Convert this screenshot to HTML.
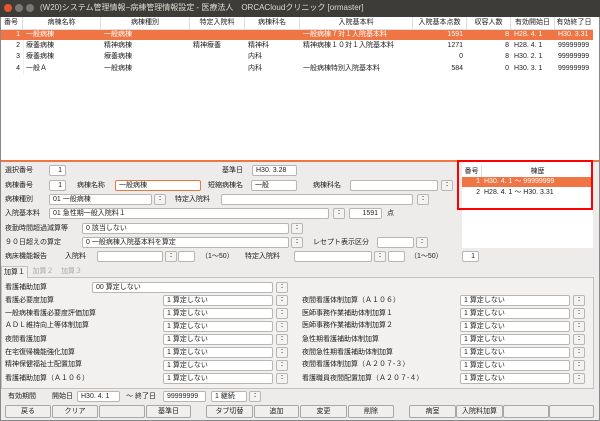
<!DOCTYPE html><html><head><meta charset="utf-8"><style>
*{margin:0;padding:0;box-sizing:border-box}
body{width:600px;height:421px;overflow:hidden;background:#edeceb;font-family:"Liberation Sans","Noto Sans CJK JP",sans-serif;font-size:7px;color:#222;position:relative}
div,span{position:absolute;white-space:nowrap}
.t{line-height:10px}
.b{background:#fff;border:1px solid #b8b6b2;border-radius:2px;height:11px;line-height:9px;padding-left:3px;font-size:7px}
.s{background:#f4f3f2;border:1px solid #b8b6b2;border-radius:2px;height:11px;width:12px;text-align:center;line-height:8px;font-size:7px;font-weight:bold;color:#444}
.btn{background:#f0efee;border:1px solid #a9a7a3;border-radius:2px;height:13px;line-height:11px;text-align:center;font-size:7px}
.h{top:17px;height:12px;line-height:12px;text-align:center;border-right:1px solid #ddd;font-size:7px}
.r{height:11px;line-height:11px;font-size:7px}
</style></head><body>
<div style="left:0;top:0;width:600px;height:17px;background:#3d3c38;color:#dfdbd2;font-size:8px;line-height:16px;padding-left:40px">(W20)システム管理情報−病棟管理情報設定 - 医療法人　ORCACloudクリニック [ormaster]</div>
<div style="left:4px;top:4px;width:8px;height:8px;border-radius:50%;background:#e9552a"></div>
<div style="left:15px;top:4px;width:8px;height:8px;border-radius:50%;background:#7a7975"></div>
<div style="left:26px;top:4px;width:8px;height:8px;border-radius:50%;background:#7a7975"></div>
<div style="left:0;top:17px;width:600px;height:144px;background:#fff"></div>
<div class="h" style="left:0;width:23px">番号</div>
<div class="h" style="left:23px;width:78px">病棟名称</div>
<div class="h" style="left:101px;width:89px">病棟種別</div>
<div class="h" style="left:190px;width:55px">特定入院料</div>
<div class="h" style="left:245px;width:55px">病棟科名</div>
<div class="h" style="left:300px;width:113px">入院基本料</div>
<div class="h" style="left:413px;width:54px">入院基本点数</div>
<div class="h" style="left:467px;width:44px">収容人数</div>
<div class="h" style="left:511px;width:44px">有効開始日</div>
<div class="h" style="left:555px;width:38px;border:0">有効終了日</div>
<div style="left:0;top:29px;width:593px;height:1px;background:#ddd"></div>
<div style="left:0;top:30px;width:593px;height:10px;background:#f07545"></div>
<div class="r" style="left:0;top:29px;width:593px;color:#fff">
<span style="left:0;width:20px;text-align:right">1</span><span style="left:26px">一般病棟</span><span style="left:104px">一般病棟</span><span style="left:303px">一般病棟７対１入院基本料</span><span style="left:413px;width:50px;text-align:right">1591</span><span style="left:467px;width:42px;text-align:right">8</span><span style="left:514px">H28. 4. 1</span><span style="left:558px">H30. 3.31</span></div>
<div class="r" style="left:0;top:40px;width:593px">
<span style="left:0;width:20px;text-align:right">2</span><span style="left:26px">療養病棟</span><span style="left:104px">精神病棟</span><span style="left:193px">精神療養</span><span style="left:248px">精神科</span><span style="left:303px">精神病棟１０対１入院基本料</span><span style="left:413px;width:50px;text-align:right">1271</span><span style="left:467px;width:42px;text-align:right">8</span><span style="left:514px">H28. 4. 1</span><span style="left:558px">99999999</span></div>
<div class="r" style="left:0;top:51px;width:593px">
<span style="left:0;width:20px;text-align:right">3</span><span style="left:26px">療養病棟</span><span style="left:104px">療養病棟</span><span style="left:248px">内科</span><span style="left:413px;width:50px;text-align:right">0</span><span style="left:467px;width:42px;text-align:right">8</span><span style="left:514px">H30. 2. 1</span><span style="left:558px">99999999</span></div>
<div class="r" style="left:0;top:63px;width:593px">
<span style="left:0;width:20px;text-align:right">4</span><span style="left:26px">一般Ａ</span><span style="left:104px">一般病棟</span><span style="left:248px">内科</span><span style="left:303px">一般病棟特別入院基本料</span><span style="left:413px;width:50px;text-align:right">584</span><span style="left:467px;width:42px;text-align:right">0</span><span style="left:514px">H30. 3. 1</span><span style="left:558px">99999999</span></div>
<div style="left:23px;top:40px;width:1px;height:35px;background:#eee"></div>
<div style="left:0;top:160px;width:600px;height:2px;background:#f07545"></div>

<div class="t" style="left:5px;top:166px">選択番号</div><div class="b" style="left:49px;top:165px;width:17px;text-align:right;padding-right:3px">1</div>
<div class="t" style="left:222px;top:166px">基準日</div><div class="b" style="left:252px;top:165px;width:45px">H30. 3.28</div>
<div class="t" style="left:5px;top:181px">病棟番号</div><div class="b" style="left:49px;top:180px;width:17px;text-align:right;padding-right:3px">1</div>
<div class="t" style="left:77px;top:181px">病棟名称</div><div class="b" style="left:115px;top:180px;width:86px;border-color:#e9773f">一般病棟</div>
<div class="t" style="left:208px;top:181px">短縮病棟名</div><div class="b" style="left:251px;top:180px;width:46px">一般</div>
<div class="t" style="left:313px;top:181px">病棟科名</div><div class="b" style="left:350px;top:180px;width:88px"></div><div class="s" style="left:441px;top:180px">:</div>
<div class="t" style="left:5px;top:195px">病棟種別</div><div class="b" style="left:49px;top:194px;width:103px">01 一般病棟</div><div class="s" style="left:154px;top:194px">:</div>
<div class="t" style="left:175px;top:195px">特定入院料</div><div class="b" style="left:221px;top:194px;width:192px"></div><div class="s" style="left:417px;top:194px">:</div>
<div class="t" style="left:5px;top:209px">入院基本料</div><div class="b" style="left:49px;top:208px;width:280px">01 急性期一般入院料１</div><div class="s" style="left:333px;top:208px">:</div><div class="b" style="left:349px;top:208px;width:33px;text-align:right;padding-right:3px">1591</div><div class="t" style="left:387px;top:209px">点</div>
<div class="t" style="left:5px;top:224px">夜勤時間超過減算等</div><div class="b" style="left:82px;top:223px;width:207px">0 該当しない</div><div class="s" style="left:291px;top:223px">:</div>
<div class="t" style="left:5px;top:238px">９０日超えの算定</div><div class="b" style="left:82px;top:237px;width:207px">0 一般病棟入院基本料を算定</div><div class="s" style="left:291px;top:237px">:</div>
<div class="t" style="left:313px;top:238px">レセプト表示区分</div><div class="b" style="left:377px;top:237px;width:37px"></div><div class="s" style="left:416px;top:237px">:</div>
<div class="t" style="left:5px;top:252px">病床機能報告</div><div class="t" style="left:65px;top:252px">入院料</div><div class="b" style="left:97px;top:251px;width:66px"></div><div class="s" style="left:165px;top:251px">:</div><div class="b" style="left:178px;top:251px;width:17px"></div><div class="t" style="left:201px;top:252px">（1～50）</div>
<div class="t" style="left:245px;top:252px">特定入院料</div><div class="b" style="left:294px;top:251px;width:78px"></div><div class="s" style="left:374px;top:251px">:</div><div class="b" style="left:388px;top:251px;width:17px"></div><div class="t" style="left:410px;top:252px">（1～50）</div><div class="b" style="left:462px;top:251px;width:17px;text-align:right;padding-right:3px">1</div>

<div style="left:462px;top:162px;width:131px;height:86px;background:#fff"></div>
<div style="left:462px;top:166px;width:20px;height:11px;line-height:11px;text-align:center;border-right:1px solid #ddd">番号</div>
<div style="left:482px;top:166px;width:111px;height:11px;line-height:11px;text-align:center">棟歴</div>
<div style="left:462px;top:177px;width:131px;height:10px;background:#f07545;color:#fff;line-height:10px"><span style="left:0;width:18px;text-align:right">1</span><span style="left:22px">H30. 4. 1 ～ 99999999</span></div>
<div style="left:462px;top:188px;width:131px;height:10px;line-height:10px"><span style="left:0;width:18px;text-align:right">2</span><span style="left:22px">H28. 4. 1 ～ H30. 3.31</span></div>
<div style="left:457px;top:160px;width:136px;height:50px;border:2px solid #f00"></div>

<div style="left:1px;top:277px;width:593px;height:112px;border:1px solid #c4c2be;background:#f2f1f0"></div>
<div style="left:1px;top:266px;width:27px;height:12px;background:#f2f1f0;border:1px solid #c4c2be;border-bottom:0;line-height:11px;text-align:center">加算１</div>
<div style="left:30px;top:266px;width:26px;height:11px;line-height:11px;text-align:center;color:#aaa">加算２</div>
<div style="left:58px;top:266px;width:27px;height:11px;line-height:11px;text-align:center;color:#aaa">加算３</div>
<div class="t" style="left:5px;top:283px">看護補助加算</div><div class="b" style="left:92px;top:282px;width:181px">00 算定しない</div><div class="s" style="left:276px;top:282px">:</div>

<div class="t" style="left:5px;top:296px">看護必要度加算</div><div class="b" style="left:163px;top:295px;width:110px">1 算定しない</div><div class="s" style="left:276px;top:295px">:</div>
<div class="t" style="left:5px;top:309px">一般病棟看護必要度評価加算</div><div class="b" style="left:163px;top:308px;width:110px">1 算定しない</div><div class="s" style="left:276px;top:308px">:</div>
<div class="t" style="left:5px;top:321px">ＡＤＬ維持向上等体制加算</div><div class="b" style="left:163px;top:321px;width:110px">1 算定しない</div><div class="s" style="left:276px;top:321px">:</div>
<div class="t" style="left:5px;top:335px">夜間看護加算</div><div class="b" style="left:163px;top:334px;width:110px">1 算定しない</div><div class="s" style="left:276px;top:334px">:</div>
<div class="t" style="left:5px;top:348px">在宅復帰機能強化加算</div><div class="b" style="left:163px;top:347px;width:110px">1 算定しない</div><div class="s" style="left:276px;top:347px">:</div>
<div class="t" style="left:5px;top:360px">精神保健福祉士配置加算</div><div class="b" style="left:163px;top:360px;width:110px">1 算定しない</div><div class="s" style="left:276px;top:360px">:</div>
<div class="t" style="left:5px;top:374px">看護補助加算（Ａ１０６）</div><div class="b" style="left:163px;top:373px;width:110px">1 算定しない</div><div class="s" style="left:276px;top:373px">:</div>

<div class="t" style="left:302px;top:296px">夜間看護体制加算（Ａ１０６）</div><div class="b" style="left:460px;top:295px;width:110px">1 算定しない</div><div class="s" style="left:573px;top:295px">:</div>
<div class="t" style="left:302px;top:309px">医師事務作業補助体制加算１</div><div class="b" style="left:460px;top:308px;width:110px">1 算定しない</div><div class="s" style="left:573px;top:308px">:</div>
<div class="t" style="left:302px;top:321px">医師事務作業補助体制加算２</div><div class="b" style="left:460px;top:321px;width:110px">1 算定しない</div><div class="s" style="left:573px;top:321px">:</div>
<div class="t" style="left:302px;top:335px">急性期看護補助体制加算</div><div class="b" style="left:460px;top:334px;width:110px">1 算定しない</div><div class="s" style="left:573px;top:334px">:</div>
<div class="t" style="left:302px;top:348px">夜間急性期看護補助体制加算</div><div class="b" style="left:460px;top:347px;width:110px">1 算定しない</div><div class="s" style="left:573px;top:347px">:</div>
<div class="t" style="left:302px;top:360px">夜間看護体制加算（Ａ２０７-３）</div><div class="b" style="left:460px;top:360px;width:110px">1 算定しない</div><div class="s" style="left:573px;top:360px">:</div>
<div class="t" style="left:302px;top:374px">看護職員夜間配置加算（Ａ２０７-４）</div><div class="b" style="left:460px;top:373px;width:110px">1 算定しない</div><div class="s" style="left:573px;top:373px">:</div>

<div class="t" style="left:8px;top:392px">有効期間</div><div class="t" style="left:52px;top:392px">開始日</div><div class="b" style="left:77px;top:391px;width:43px">H30. 4. 1</div>
<div class="t" style="left:126px;top:392px">～</div><div class="t" style="left:135px;top:392px">終了日</div><div class="b" style="left:163px;top:391px;width:43px">99999999</div>
<div class="b" style="left:211px;top:391px;width:36px">1 継続</div><div class="s" style="left:249px;top:391px">:</div>

<div class="btn" style="left:5px;top:405px;width:46px">戻る</div>
<div class="btn" style="left:52px;top:405px;width:46px">クリア</div>
<div class="btn" style="left:99px;top:405px;width:46px"></div>
<div class="btn" style="left:146px;top:405px;width:45px">基準日</div>
<div class="btn" style="left:206px;top:405px;width:47px">タブ切替</div>
<div class="btn" style="left:254px;top:405px;width:45px">追加</div>
<div class="btn" style="left:300px;top:405px;width:47px">変更</div>
<div class="btn" style="left:348px;top:405px;width:46px">削除</div>
<div class="btn" style="left:409px;top:405px;width:47px">病室</div>
<div class="btn" style="left:456px;top:405px;width:47px">入院料加算</div>
<div class="btn" style="left:503px;top:405px;width:46px"></div>
<div class="btn" style="left:549px;top:405px;width:45px"></div>
<div style="left:0;top:17px;width:600px;height:404px;border:1px solid #888;border-top:0"></div>
</body></html>
